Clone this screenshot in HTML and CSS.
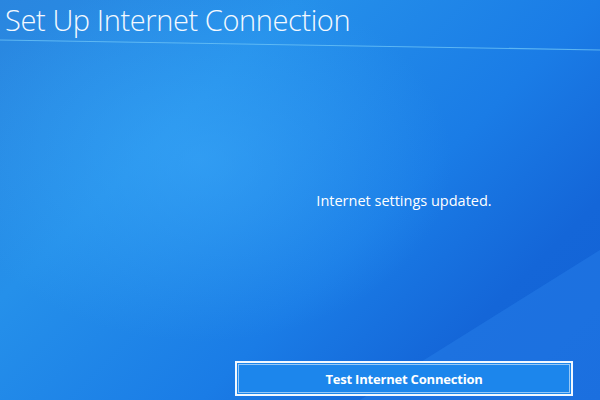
FILE: index.html
```html
<!DOCTYPE html>
<html>
<head>
<meta charset="utf-8">
<link rel="stylesheet" href="styles.css">
</head>
<body>
<div class="screen">
  <svg class="wave" width="600" height="400" viewBox="0 0 600 400">
    <path d="M600 250 L600 400 L360 400 Z" fill="#2f8af0" opacity="0.35"/>
    <line x1="0" y1="40" x2="600" y2="50" stroke="#6cc3f7" stroke-width="1.2" opacity="0.8"/>
  </svg>
  <header class="header">
    <h1 class="title">Set Up Internet Connection</h1>
  </header>
  <main class="content">
    <div class="column">
      <p class="message">Internet settings updated.</p>
      <div class="spacer"></div>
      <div class="button"><span>Test Internet Connection</span></div>
    </div>
  </main>
</div>
</body>
</html>
```
FILE: styles.css
```css
html, body {
  margin: 0;
  padding: 0;
}
body {
  width: 600px;
  height: 400px;
  overflow: hidden;
  font-family: "Open Sans", "DejaVu Sans", sans-serif;
  color: #fff;
}
.screen {
  position: relative;
  width: 600px;
  height: 400px;
  display: flex;
  flex-direction: column;
  background:
    radial-gradient(ellipse 360px 260px at 200px 160px, rgba(60,170,250,0.55), rgba(60,170,250,0) 70%),
    linear-gradient(135deg, #2a86df 0%, #2590ea 30%, #1a7ce6 60%, #1466d8 80%, #1262d6 100%);
}
.wave {
  position: absolute;
  left: 0;
  top: 0;
  pointer-events: none;
}
.header {
  position: relative;
  height: 44px;
  padding-left: 5px;
}
.title {
  margin: 0;
  padding-top: 1px;
  font-weight: 300;
  font-size: 29px;
  line-height: 38px;
  letter-spacing: -0.4px;
  color: #f4f9ff;
}
.content {
  position: relative;
  flex: 1;
  display: flex;
  padding-left: 235px;
  padding-bottom: 5px;
}
.column {
  width: 338px;
  display: flex;
  flex-direction: column;
  align-items: center;
}
.message {
  margin: 147px 0 0 0;
  font-size: 14.5px;
  line-height: 20px;
  font-weight: 400;
}
.spacer {
  flex: 1;
}
.button {
  box-sizing: border-box;
  width: 338px;
  height: 35px;
  margin-bottom: -1px;
  border: 2px solid #f2f8ff;
  padding: 1px;
  background: #1c86ec;
}
.button span {
  box-sizing: border-box;
  display: flex;
  align-items: center;
  justify-content: center;
  height: 100%;
  border: 1px solid rgba(255,255,255,0.55);
  font-weight: 700;
  font-size: 13px;
  letter-spacing: -0.2px;
}
```
